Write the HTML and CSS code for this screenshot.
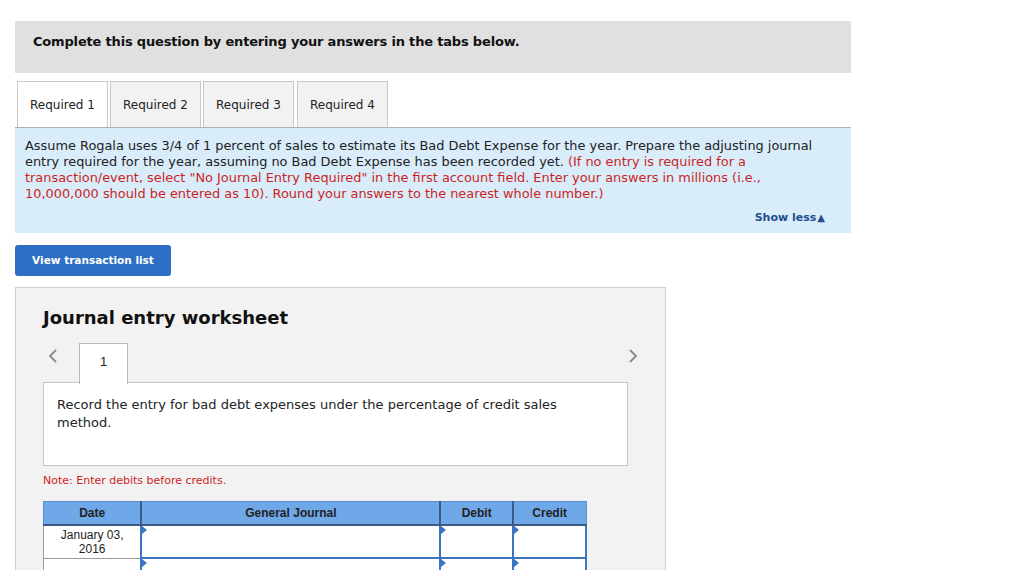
FILE: index.html
```html
<!DOCTYPE html>
<html>
<head>
<meta charset="utf-8">
<link rel="stylesheet" href="styles.css">
</head>
<body>
<div class="page">
  <div class="header">Complete this question by entering your answers in the tabs below.</div>
  <div class="tabs">
    <div class="tab active">Required 1</div>
    <div class="tab">Required 2</div>
    <div class="tab">Required 3</div>
    <div class="tab">Required 4</div>
  </div>
  <div class="prompt">
    <p>Assume Rogala uses 3/4 of 1 percent of sales to estimate its Bad Debt Expense for the year. Prepare the adjusting journal entry required for the year, assuming no Bad Debt Expense has been recorded yet. <span class="red">(If no entry is required for a transaction/event, select "No Journal Entry Required" in the first account field. Enter your answers in millions (i.e., 10,000,000 should be entered as 10). Round your answers to the nearest whole number.)</span></p>
    <div class="showless">Show less<span class="tri">&#9650;</span></div>
  </div>
  <button class="btn">View transaction list</button>
  <div class="panel">
    <h2 class="title">Journal entry worksheet</h2>
    <div class="nav">
      <span class="arrow">
        <svg width="10" height="16" viewBox="0 0 10 16"><path d="M8 2 L2 8 L8 14" fill="none" stroke="#8a8a8a" stroke-width="1.8"/></svg>
      </span>
      <div class="navtab">1</div>
      <span class="spacer"></span>
      <span class="arrow right">
        <svg width="10" height="16" viewBox="0 0 10 16"><path d="M2 2 L8 8 L2 14" fill="none" stroke="#8a8a8a" stroke-width="1.8"/></svg>
      </span>
    </div>
    <div class="desc">Record the entry for bad debt expenses under the percentage of credit sales method.</div>
    <div class="note">Note: Enter debits before credits.</div>
    <table class="journal">
      <thead>
        <tr><th class="c-date">Date</th><th class="c-gj">General Journal</th><th class="c-debit">Debit</th><th class="c-credit">Credit</th></tr>
      </thead>
      <tbody>
        <tr><td class="date">January 03,<br>2016</td><td class="inp"><i class="flag"></i></td><td class="inp"><i class="flag"></i></td><td class="inp"><i class="flag"></i></td></tr>
        <tr><td class="date"></td><td class="inp"><i class="flag"></i></td><td class="inp"><i class="flag"></i></td><td class="inp"><i class="flag"></i></td></tr>
      </tbody>
    </table>
  </div>
</div>
</body>
</html>
```

FILE: styles.css
```css
html, body { margin: 0; padding: 0; background: #fff; }
body { font-family: "DejaVu Sans", Verdana, sans-serif; color: #222; overflow: hidden; height: 570px; }
.page { padding: 21px 0 0 15px; width: 836px; }
.header {
  height: 52px; box-sizing: border-box; background: #e0e0e0;
  padding: 13px 0 0 18px; font-size: 13px; letter-spacing: -0.18px; font-weight: bold; color: #111; line-height: 16px;
}
.tabs {
  display: flex; gap: 2px; margin-top: 8px; padding-left: 2px;
  border-bottom: 1px solid #b0b0b0; height: 46px;
}
.tab {
  width: 91px; box-sizing: border-box; height: 46px; border: 1px solid #c8c8c8; border-bottom: none;
  background: #f2f2f2; font-size: 12px; color: #222; display: flex; align-items: center; justify-content: center;
}
.tab:last-child { margin-left: 1px; }
.tab.active { background: #fff; }
.prompt { background: #d9ecfa; padding: 10px 26px 8px 10px; height: 105px; box-sizing: border-box; }
.prompt p { margin: 0; font-size: 12.9px; line-height: 16px; color: #222; }
.red { color: #cc1f1f; }
.showless { text-align: right; margin-top: 8px; font-size: 11px; font-weight: bold; color: #1f4e8c; line-height: 16px; }
.tri { font-size: 10px; margin-left: 1px; }
.btn {
  display: block; margin-top: 12px; width: 156px; height: 31px; background: #2d6fc4; color: #fff;
  border: none; border-radius: 3px; font-family: "DejaVu Sans", Verdana, sans-serif; font-size: 10.5px; font-weight: bold; padding: 0 0 1px 0;
}
.panel {
  margin-top: 11px; width: 651px; height: 300px; box-sizing: border-box; background: #f2f2f2;
  border: 1px solid #cfcfcf; padding: 0 27px;
}
.title { margin: 17px 0 0 0; font-size: 18px; font-weight: bold; color: #111; line-height: 26px; }
.nav { display: flex; align-items: flex-start; margin-top: 12px; height: 39px; width: 597px; }
.arrow { width: 36px; padding-left: 5px; box-sizing: border-box; padding-top: 5px; height: 39px; }
.arrow.right { width: 12px; padding-left: 0; }
.navtab {
  width: 49px; height: 41px; box-sizing: border-box; background: #fff; border: 1px solid #b8b8b8; border-bottom: none;
  font-family: "Liberation Sans", Arial, sans-serif; font-size: 13px; color: #222; text-align: center; padding-top: 10px;
  position: relative; z-index: 1;
}
.spacer { flex: 1; }
.desc {
  width: 585px; height: 84px; box-sizing: border-box; background: #fff; border: 1px solid #c4c4c4;
  padding: 13px 14px 0 13px; font-size: 13px; line-height: 18px; color: #222;
}
.note { margin-top: 8px; font-size: 11px; color: #cc1f1f; line-height: 14px; }
.journal {
  margin-top: 13px; border-collapse: collapse; font-family: "Liberation Sans", Arial, sans-serif; font-size: 12px; width: 544px;
}
.journal th {
  background: #6fa8e8; color: #222; font-weight: bold; height: 22px; padding: 0;
  border: 2px solid #3d5a80; border-top: 1px solid #5b8fd0;
}
.journal th:first-child { border-left: 1px solid #5b8fd0; }
.journal th:last-child { border-right: 1px solid #5b8fd0; }
.c-date { width: 97px; }
.c-gj { width: 300px; }
.c-debit { width: 71px; }
.c-credit { width: 72px; }
.journal td { height: 31px; padding: 0; background: #fff; }
.date { text-align: center; border: 1px solid #9a9a9a; line-height: 14px; color: #222; }
.inp { border: 2px solid #3a74c2; position: relative; }
.flag {
  position: absolute; left: 0; top: 0; width: 0; height: 0;
  border-top: 4px solid transparent; border-bottom: 4px solid transparent; border-left: 5px solid #3a74c2;
}
```
